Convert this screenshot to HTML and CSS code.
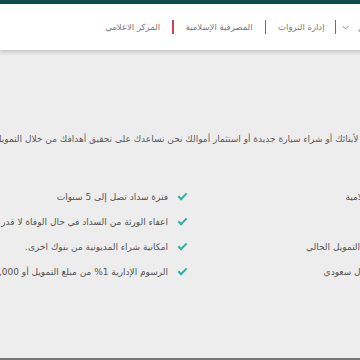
FILE: index.html
```html
<!DOCTYPE html>
<html lang="ar" dir="rtl">
<head>
    <meta charset="UTF-8">
    <meta name="viewport" content="width=device-width, initial-scale=1.0">
    <link rel="stylesheet" href="styles.css">
</head>
<body>

<div class="topbar"></div>

<nav class="nav">
    <div class="nav-item">الأعمال
        <svg class="chevron" width="7" height="5" viewBox="0 0 7 5"><path d="M0.5 1 L3.5 4 L6.5 1" fill="none" stroke="#888" stroke-width="0.9"/></svg>
    </div>
    <span class="sep first"></span>
    <div class="nav-item">إدارة الثروات</div>
    <span class="sep"></span>
    <div class="nav-item">المصرفية الإسلامية</div>
    <span class="sep"></span>
    <div class="nav-item">المركز الاعلامي</div>
</nav>

<main class="content">
    <p class="intro">سواء كنت تخطط لتعليم لأبنائك أو شراء سيارة جديدة أو استثمار أموالك نحن نساعدك على تحقيق أهدافك من خلال التمويل الشخصي</p>

    <div class="features">
        <ul class="list">
            <li>متوافقة مع أحكام الشريعة الإسلامية</li>
            <li>تمويل سريع</li>
            <li>إمكانية زيادة مبلغ وإعادة جدولة التمويل الحالي</li>
            <li>تمويل يصل إلى 2,500,000 ريال سعودي</li>
        </ul>
        <ul class="list">
            <li>فترة سداد تصل إلى 5 سنوات</li>
            <li>اعفاء الورثة من السداد في حال الوفاة لا قدر الله (**)</li>
            <li>امكانية شراء المديونية من بنوك اخرى.</li>
            <li>الرسوم الإدارية 1% من مبلغ التمويل أو 5,000 ريال سعودي</li>
        </ul>
    </div>
</main>

<div class="bottom-line"></div>

</body>
</html>
```

FILE: styles.css
```css
html, body {
    margin: 0;
    height: 100%;
    overflow: hidden;
}
body {
    font-family: "DejaVu Sans", "Noto Sans", sans-serif;
    background: #ededed;
    color: #555;
    display: flex;
    flex-direction: column;
}
.topbar {
    height: 4px;
    background: #0f4c4b;
}
.nav {
    height: 46px;
    background: #fff;
    box-shadow: 0 2px 4px rgba(0, 0, 0, 0.18);
    display: flex;
    align-items: center;
    margin-right: -24px;
    font-size: 8.5px;
    color: #777;
}
.nav-item {
    display: flex;
    align-items: center;
    gap: 9px;
    white-space: nowrap;
}
.sep {
    width: 1.5px;
    height: 14px;
    background: #c0475a;
    margin: 0 12px;
}
.sep.first {
    margin-right: 6px;
    margin-left: 10px;
}
.content {
    flex: 1;
    width: 592px;
    margin-right: -140px;
    padding-top: 84px;
}
.intro {
    margin: 0;
    text-align: center;
    white-space: nowrap;
    font-size: 9px;
    color: #5c5c5c;
}
.features {
    display: grid;
    grid-template-columns: 1fr 1fr;
    gap: 30px;
    margin-top: 46px;
}
.list {
    list-style: none;
    margin: 0;
    padding: 0;
    display: flex;
    flex-direction: column;
    gap: 11px;
}
.list li {
    display: flex;
    align-items: center;
    gap: 10px;
    height: 14px;
    white-space: nowrap;
    font-size: 9px;
    color: #555;
}
.list li::before {
    content: '';
    flex: none;
    width: 7px;
    height: 3px;
    margin-right: 2px;
    margin-top: -3px;
    border-left: 2px solid #2cb3a4;
    border-bottom: 2px solid #2cb3a4;
    transform: rotate(-45deg);
}
.bottom-line {
    height: 2px;
    background: #777;
}
```
